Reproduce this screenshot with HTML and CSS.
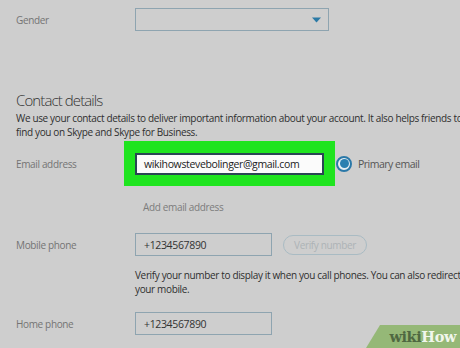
FILE: index.html
```html
<!DOCTYPE html>
<html lang="en">
<head>
<meta charset="utf-8">
<title>Contact details</title>
<link rel="stylesheet" href="styles.css">
</head>
<body>
<div class="page">
  <div class="row row-gender">
    <div class="label">Gender</div>
    <div class="select">
      <svg class="caret" width="9" height="6" viewBox="0 0 9 6"><path d="M0 0.5h9L4.5 5.5z" fill="#2b7aa6"/></svg>
    </div>
  </div>

  <h2 class="heading">Contact details</h2>
  <p class="intro">We use your contact details to deliver important information about your account. It also helps friends to<br>find you on Skype and Skype for Business.</p>

  <div class="row row-email">
    <div class="label">Email address</div>
    <div class="highlight">
      <div class="input input-email">wikihowstevebolinger@gmail.com</div>
    </div>
    <span class="radio"><span class="dot"></span></span>
    <span class="radio-label">Primary email</span>
  </div>
  <div class="add-email">Add email address</div>

  <div class="row row-mobile">
    <div class="label">Mobile phone</div>
    <div class="input input-phone">+1234567890</div>
    <div class="verify-btn">Verify number</div>
  </div>
  <p class="verify-note">Verify your number to display it when you call phones. You can also redirect<br>your mobile.</p>

  <div class="row row-home">
    <div class="label">Home phone</div>
    <div class="input input-phone">+1234567890</div>
  </div>
</div>
<div class="wikihow"><span class="wiki">wiki</span><span class="how">How</span></div>
</body>
</html>
```
FILE: styles.css
```css
html, body {
  margin: 0;
  padding: 0;
}
body {
  width: 460px;
  height: 348px;
  overflow: hidden;
  position: relative;
  background: #cecece;
  font-family: "Open Sans", "Noto Sans", sans-serif;
  font-size: 10px;
  letter-spacing: -0.35px;
  color: #2e2e2e;
}
.page {
  padding: 8px 0 0 16px;
}
.row {
  display: flex;
  align-items: center;
}
.label {
  width: 119px;
  flex: none;
  color: #747474;
  font-size: 10px;
  white-space: nowrap;
}
.select {
  width: 185px;
  height: 21px;
  border: 1px solid #8ea4b0;
  display: flex;
  align-items: center;
  justify-content: flex-end;
  padding-right: 7px;
  box-sizing: content-box;
}
.caret {
  display: block;
}
.heading {
  margin: 59px 0 0 0;
  font-size: 15px;
  font-weight: 300;
  letter-spacing: -0.9px;
  line-height: 20px;
  color: #333;
}
.intro {
  margin: 1px 0 0 0;
  line-height: 14px;
  white-space: nowrap;
  color: #2e2e2e;
}
.row-email {
  margin-top: 2px;
}
.highlight {
  background: #1fe41f;
  padding: 12px 11px 11px 11px;
  margin-left: -11px;
}
.input {
  box-sizing: border-box;
  height: 23px;
  border: 1px solid #8ea4b0;
  padding-left: 8px;
  display: flex;
  align-items: center;
  color: #333;
  font-size: 10.5px;
  white-space: nowrap;
}
.input-email {
  width: 189px;
  height: 22px;
  background: #fbfbfb;
  border: 2px solid #2a4554;
  padding-left: 7px;
  color: #222;
}
.radio {
  box-sizing: border-box;
  width: 16px;
  height: 16px;
  margin-left: 1px;
  border: 2px solid #2a78a8;
  border-radius: 50%;
  background: #e6eef3;
  display: flex;
  align-items: center;
  justify-content: center;
}
.dot {
  width: 9px;
  height: 9px;
  border-radius: 50%;
  background: #2a7fb0;
}
.radio-label {
  margin-left: 6px;
  color: #555;
  font-size: 10.5px;
  letter-spacing: -0.5px;
}
.add-email {
  margin: 14px 0 0 127px;
  color: #7c7c7c;
}
.row-mobile {
  margin-top: 19px;
}
.input-phone {
  width: 137px;
}
.verify-btn {
  box-sizing: border-box;
  margin-left: 11px;
  width: 84px;
  height: 20px;
  border: 1px solid #a9bbc3;
  border-radius: 10px;
  display: flex;
  align-items: center;
  justify-content: center;
  color: #adb3b6;
}
.verify-note {
  margin: 12px 0 0 119px;
  line-height: 14px;
  white-space: nowrap;
  color: #2e2e2e;
}
.row-home {
  margin-top: 16px;
}
.wikihow {
  position: absolute;
  right: 0;
  bottom: 0;
  width: 94px;
  height: 23px;
  background: #95b877;
  clip-path: polygon(14px 0, 100% 0, 100% 100%, 0 100%);
  display: flex;
  align-items: center;
  justify-content: flex-end;
  padding-right: 4px;
  box-sizing: border-box;
  font-family: "DejaVu Serif", serif;
  font-weight: bold;
  font-size: 14.5px;
  letter-spacing: -0.4px;
}
.wiki {
  color: #4f6841;
}
.how {
  color: #f1f6ec;
}
```
